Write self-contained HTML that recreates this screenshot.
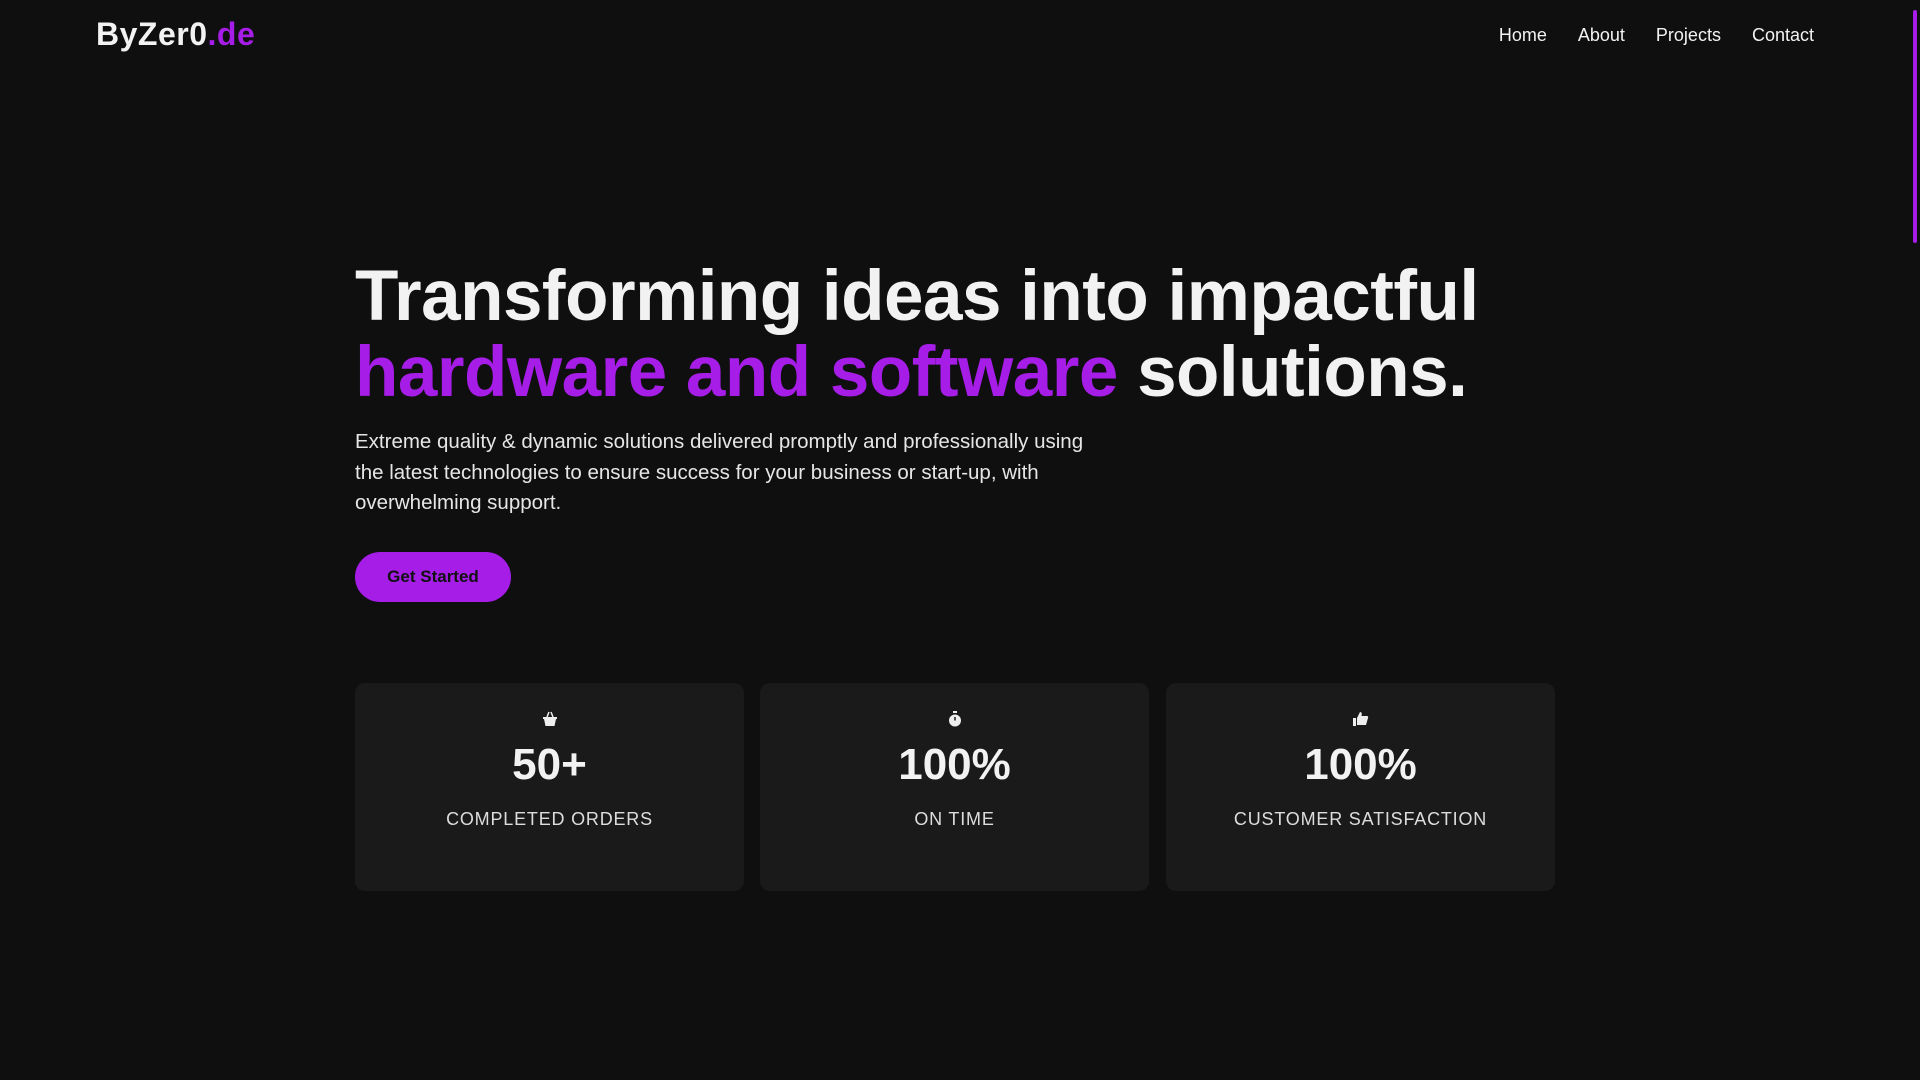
<!DOCTYPE html>
<html><head><meta charset="utf-8"><style>
*{margin:0;padding:0;box-sizing:border-box}
html,body{width:1920px;height:1080px;overflow:hidden;background:#0f0f0f;font-family:"Liberation Sans",sans-serif;color:#f2f2f2}
.logo{position:absolute;left:96px;top:16px;font-size:32px;font-weight:700;letter-spacing:0.5px}
.logo span{color:#a61de8}
nav{position:absolute;top:25px;right:106px;display:flex;gap:31px;font-size:18px}
h1{position:absolute;left:355px;top:259px;font-size:71px;line-height:76px;font-weight:700;letter-spacing:-0.5px;white-space:nowrap}
h1 .p{color:#a61de8}
p.d{position:absolute;left:355px;top:427px;width:758px;font-size:20.5px;line-height:30.6px;color:#e6e6e6}
.btn{position:absolute;left:355px;top:552px;width:156px;height:50px;border-radius:25px;background:#a61de8;color:#111;font-size:17px;font-weight:700;display:flex;align-items:center;justify-content:center}
.card{position:absolute;top:683px;width:389px;height:208px;background:#1a1a1a;border-radius:10px;text-align:center}
.card svg{position:absolute;left:186px;top:27px}
.num{position:absolute;left:0;right:0;top:57px;font-size:44px;font-weight:700}
.lab{position:absolute;left:0;right:0;top:126px;font-size:18px;letter-spacing:0.8px;color:#ddd}
.sb{position:absolute;left:1913px;top:10px;width:4px;height:233px;background:#a61de8;border-radius:2px}
</style></head><body>
<div class="logo">ByZer0<span>.de</span></div>
<nav><span>Home</span><span>About</span><span>Projects</span><span>Contact</span></nav>
<h1>Transforming ideas into impactful<br><span class="p">hardware and software</span> solutions.</h1>
<p class="d">Extreme quality &amp; dynamic solutions delivered promptly and professionally using the latest technologies to ensure success for your business or start-up, with overwhelming support.</p>
<div class="btn">Get Started</div>
<div class="card" style="left:355px"><svg width="18" height="18" viewBox="0 0 18 18"><path d="M6 7L8 2M12 7L10 2" stroke="#eee" stroke-width="1.5"/><path d="M2 7h14v2h-1l-1.5 7h-9L3 9H2z" fill="#eee"/></svg><div class="num">50+</div><div class="lab">COMPLETED ORDERS</div></div>
<div class="card" style="left:760px"><svg width="18" height="18" viewBox="0 0 18 18"><rect x="7" y="1" width="4" height="2" fill="#eee"/><circle cx="9" cy="10.5" r="6" fill="#eee"/><path d="M9 10.5V7" stroke="#1a1a1a" stroke-width="1.5"/></svg><div class="num">100%</div><div class="lab">ON TIME</div></div>
<div class="card" style="left:1166px"><svg width="18" height="18" viewBox="0 0 18 18"><rect x="1" y="8" width="3" height="8" fill="#eee"/><path d="M5 8l3-6c2 0 2 2 1.5 4H15c1 0 1.5 1 1 2l-2 7H5z" fill="#eee"/></svg><div class="num">100%</div><div class="lab">CUSTOMER SATISFACTION</div></div>
<div class="sb"></div>
</body></html>
